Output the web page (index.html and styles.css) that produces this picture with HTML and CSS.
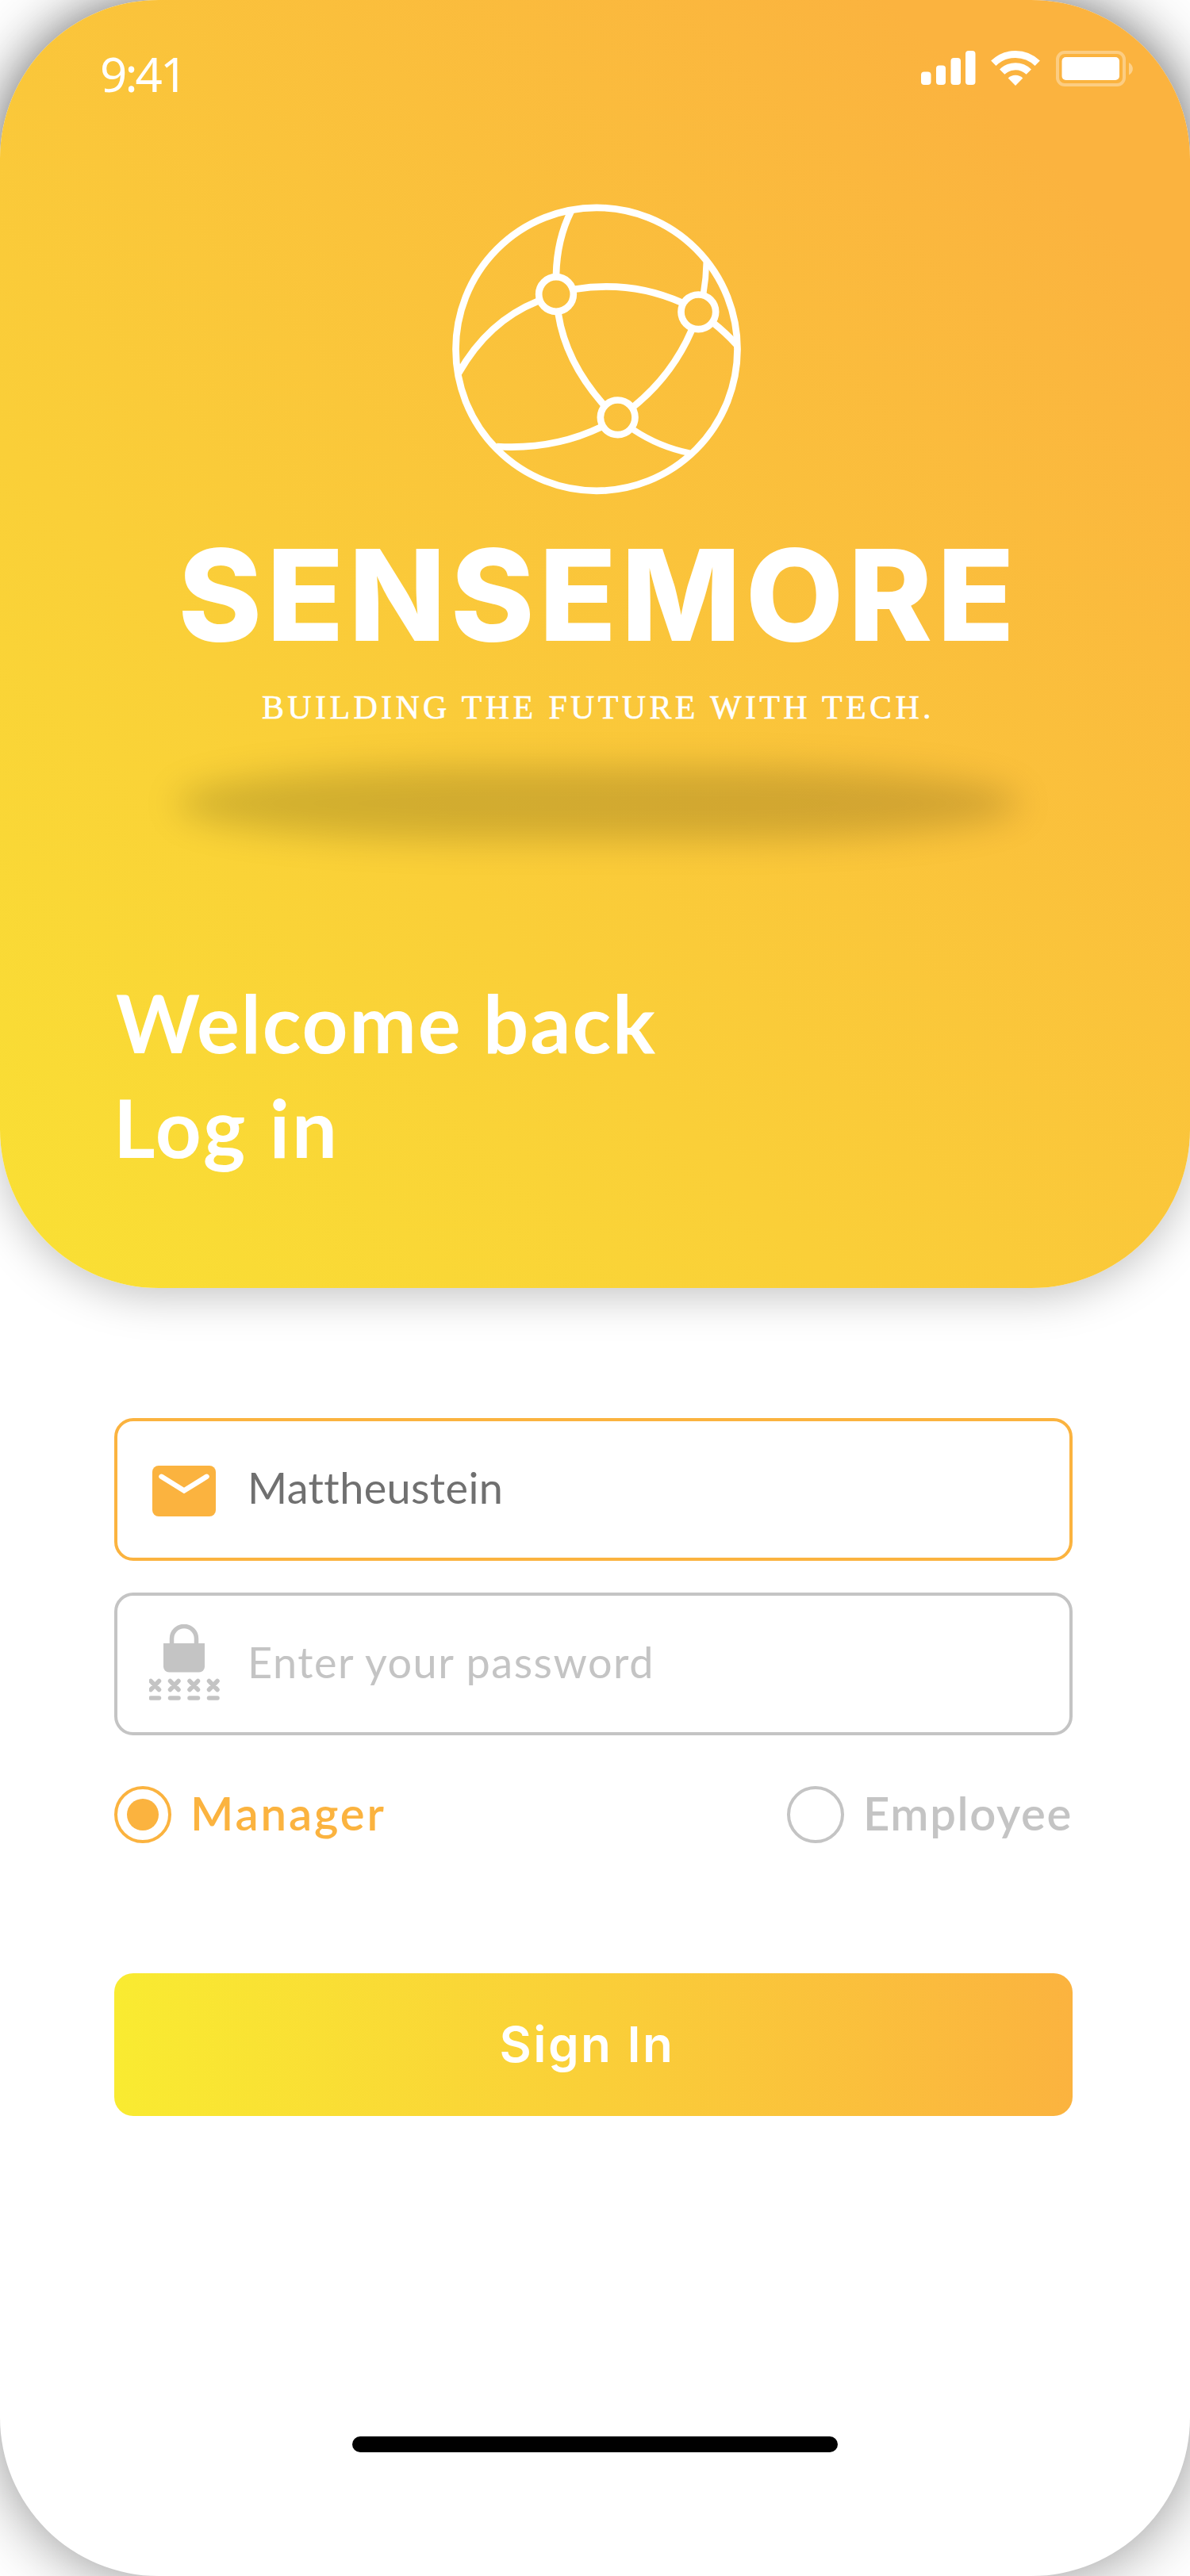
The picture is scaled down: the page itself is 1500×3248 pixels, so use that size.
FILE: index.html
```
<!DOCTYPE html>
<html lang="en">
<head>
  <meta charset="utf-8">
  <title>Sensemore – Log in</title>
  <link rel="stylesheet" href="styles.css">
</head>
<body>
  <div class="screen">
    <header class="hero">
      <div class="status">
        <span class="status-time">9:41</span>
        <svg class="status-icons" width="280" height="52" viewBox="0 0 280 52" fill="#fff">
          <rect x="5" y="30.500" width="12.500" height="16.500" rx="4"/>
          <rect x="24" y="22.500" width="12" height="24.500" rx="4"/>
          <rect x="42.500" y="13" width="12.500" height="34" rx="4"/>
          <rect x="61" y="4" width="12.500" height="43" rx="4"/>
          <g fill="none" stroke="#fff" stroke-width="9">
            <path d="M96.300 19.800a39.500 39.500 0 0 1 55.400 0"/>
            <path d="M107.200 30.600a24 24 0 0 1 33.600 0"/>
          </g>
          <path d="M124 48l-9.300-9.600a13.500 13.500 0 0 1 18.600 0z"/>
          <rect x="177" y="6" width="84" height="41" rx="9" fill="none" stroke="#fff" stroke-width="4" opacity=".35"/>
          <rect x="182.500" y="12" width="72.500" height="29" rx="5"/>
          <path d="M267 19c6.500 3.500 6.500 12 0 15.500z" opacity=".4"/>
        </svg>
      </div>

      <div class="brand">
        <svg class="globe" width="420" height="420" viewBox="0 0 1260 1260" fill="none" stroke="#fff" stroke-width="26">
          <ellipse cx="636" cy="631" rx="532.500" ry="535.500"/>
          <circle cx="483" cy="423" r="65.500"/>
          <circle cx="1021" cy="490" r="65.500"/>
          <circle cx="716" cy="889" r="65.500"/>
          <path d="M540 108Q486 215 483 350"/>
          <path d="M114 722Q225 525 414 449"/>
          <path d="M552 404Q767 370 956 454"/>
          <path d="M491 496Q519 678 662 840"/>
          <path d="M995 560Q922 728 778 846"/>
          <path d="M1051 302Q1050 362 1040 420" stroke-width="23"/>
          <path d="M1078 532Q1120 565 1166 614"/>
          <path d="M652 926Q473 1012 258 999"/>
          <path d="M776 936Q872 1000 988 1024" stroke-width="23"/>
        </svg>
        <div class="brand-name">SENSEMORE</div>
        <div class="brand-tagline">BUILDING THE FUTURE WITH TECH.</div>
        <div class="brand-shadow"></div>
      </div>

      <h1 class="welcome">
        <span>Welcome back</span>
        <span class="welcome-action">Log in</span>
      </h1>
    </header>

    <main class="form">
      <div class="field field-active">
        <svg class="field-icon" width="88" height="100" viewBox="0 0 88 100">
          <rect x="4" y="20" width="80" height="64" rx="8" fill="#fbb33f"/>
          <path d="M15.500 33.800L44 51.500L72.500 33.800" fill="none" stroke="#fff" stroke-width="6.500" stroke-linecap="round"/>
        </svg>
        <span class="field-text">Mattheustein</span>
      </div>

      <div class="field field-idle">
        <svg class="field-icon" width="92" height="100" viewBox="0 0 92 100" fill="#c4c4c4">
          <path d="M18 24h52v29.500a7 7 0 0 1-7 7h-38a7 7 0 0 1-7-7z"/>
          <path d="M28.500 25v-7a15.500 15.500 0 0 1 31 0v7" fill="none" stroke="#c4c4c4" stroke-width="5.500"/>
          <g fill="none" stroke="#c4c4c4" stroke-width="5.500" stroke-linecap="round">
            <path d="M2 71.500l10.500 11m0-11l-10.500 11M26.500 71.500l10.500 11m0-11l-10.500 11M51 71.500l10.500 11m0-11l-10.500 11M75.500 71.500l10.500 11m0-11l-10.500 11"/>
            <path d="M2 93h10.500M26.500 93h10.500M51 93h10.500M75.500 93h10.500"/>
          </g>
        </svg>
        <span class="field-text field-placeholder">Enter your password</span>
      </div>

      <div class="roles">
        <div class="role role-selected"><span class="radio"></span><span class="role-label">Manager</span></div>
        <div class="role"><span class="radio"></span><span class="role-label role-label-employee">Employee</span></div>
      </div>

      <button class="sign-in" type="button">Sign In</button>
    </main>

    <div class="home-bar"></div>
  </div>
</body>
</html>
```
FILE: styles.css
```
* { box-sizing: border-box; }

body {
  margin: 0;
  background: #fff;
}

.screen {
  display: flex;
  flex-direction: column;
  width: 1500px;
  height: 3248px;
  border-radius: 200px;
  background: #fff;
  box-shadow: 0 0 80px rgba(0, 0, 0, .45);
}

.hero {
  height: 1624px;
  border-radius: 200px;
  background: linear-gradient(45deg, #f9eb31 -20%, #fbb33f 88%);
  box-shadow: 0 8px 56px rgba(0, 0, 0, .25);
  color: #fff;
}

.status {
  display: flex;
  justify-content: space-between;
  align-items: flex-start;
  height: 230px;
  padding: 60px 64px 0 126px;
}

.status-time {
  margin-top: 3px;
  font: 400 60px/60px "Noto Sans", sans-serif;
  letter-spacing: -2.9px;
}

.brand {
  display: flex;
  flex-direction: column;
}

.globe {
  margin-left: 540px;
}

.brand-name {
  margin: 20px 0 0 224.500px;
  font: 800 160px/160px Inter, sans-serif;
  letter-spacing: 5.9px;
  white-space: nowrap;
}

.brand-tagline {
  margin: 41px 0 0 330px;
  font: 400 42px/42px "Liberation Serif", serif;
  letter-spacing: 4.35px;
  white-space: nowrap;
  -webkit-text-stroke: .6px #fff;
}

.brand-shadow {
  width: 1064px;
  height: 92px;
  margin: 54px 0 0 222px;
  border-radius: 36% / 50%;
  background: rgba(0, 0, 0, .16);
  filter: blur(22px);
}

.welcome {
  display: flex;
  flex-direction: column;
  margin: 164px 0 0 146px;
  font: 700 101px/132px Lato, sans-serif;
  letter-spacing: 1.9px;
}

.welcome-action {
  margin-left: -3px;
  letter-spacing: 2.8px;
}

.form {
  display: flex;
  flex-direction: column;
  gap: 40px;
  width: 1208px;
  margin: 164px 0 0 144px;
}

.field {
  display: flex;
  align-items: center;
  height: 180px;
  padding: 0 40px;
  border: 4px solid #c4c4c4;
  border-radius: 24px;
}

.field-active { border-color: #fbb33f; }

.field-text {
  margin-left: 36px;
  padding-bottom: 5px;
  color: #707070;
  font: 400 54px/64px Lato, sans-serif;
  letter-spacing: .4px;
}

.field-placeholder {
  margin-left: 32px;
  color: #c4c4c4;
  letter-spacing: 1.5px;
}

.roles {
  display: flex;
  justify-content: space-between;
  margin-top: 24px;
}

.role {
  display: flex;
  align-items: center;
  gap: 24px;
  color: #c4c4c4;
}

.role-selected { color: #fbb33f; }

.radio {
  display: flex;
  width: 72px;
  height: 72px;
  border: 4px solid currentColor;
  border-radius: 50%;
}

.role-selected .radio::after {
  content: "";
  width: 40px;
  height: 40px;
  margin: auto;
  border-radius: 50%;
  background: currentColor;
}

.role-label {
  padding-bottom: 5px;
  font: 600 58px/60px Lato, sans-serif;
  letter-spacing: 2.9px;
}

.role-label-employee { letter-spacing: 1.65px; }

.sign-in {
  height: 180px;
  margin-top: 124px;
  padding: 0 16px 1px 0;
  border: 0;
  border-radius: 24px;
  background: linear-gradient(90deg, #f9eb31, #fbb33f);
  color: #fff;
  font: 600 62px/70px Inter, sans-serif;
  letter-spacing: 2.4px;
}

.home-bar {
  width: 612px;
  height: 20px;
  margin: 404px 0 0 444px;
  border-radius: 10px;
  background: #000;
}
```
